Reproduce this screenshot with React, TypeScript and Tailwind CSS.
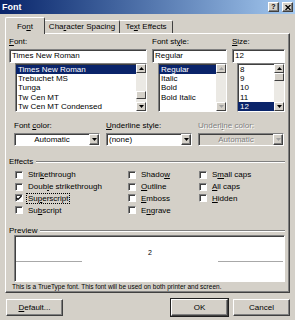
import React from 'react'

const sunken =
  'border border-t-[#808080] border-l-[#808080] border-r-white border-b-white shadow-[inset_1px_1px_0_#404040]'
const raised =
  'border border-t-white border-l-white border-r-[#404040] border-b-[#404040] shadow-[inset_-1px_-1px_0_#808080]'

function U({ children }: { children: React.ReactNode }) {
  return <span className="underline underline-offset-[1px]">{children}</span>
}

function Arrow({ dir, disabled }: { dir: 'up' | 'down'; disabled?: boolean }) {
  return (
    <svg width="5" height="3" viewBox="0 0 5 3">
      <polygon
        points={dir === 'up' ? '2.5,0 5,3 0,3' : '0,0 5,0 2.5,3'}
        fill={disabled ? '#a0a0a0' : '#000'}
      />
    </svg>
  )
}

function ScrollButton({ dir, disabled }: { dir: 'up' | 'down'; disabled?: boolean }) {
  return (
    <div className="flex h-[9px] w-[10px] items-center justify-center border border-t-white border-l-white border-r-[#404040] border-b-[#404040] bg-[#d4d0c8]">
      <Arrow dir={dir} disabled={disabled} />
    </div>
  )
}

function Scrollbar({ thumb, disabled }: { thumb?: string; disabled?: boolean }) {
  return (
    <div className="flex w-[10px] flex-col bg-[#ebe9e4]">
      <ScrollButton dir="up" disabled={disabled} />
      <div className="flex-1">
        {thumb && (
          <div
            className={`${thumb} h-[8px] w-[10px] border border-t-white border-l-white border-r-[#404040] border-b-[#404040] bg-[#d4d0c8]`}
          />
        )}
      </div>
      <ScrollButton dir="down" disabled={disabled} />
    </div>
  )
}

function ListBox({
  items,
  selected,
  className,
  thumb,
  disabled,
}: {
  items: string[]
  selected: string
  className: string
  thumb?: string
  disabled?: boolean
}) {
  return (
    <div className={`flex h-[49px] bg-white ${sunken} ${className}`}>
      <div className="min-w-0 flex-1 overflow-hidden pt-[1px]">
        {items.map((it) => (
          <div
            key={it}
            className={`h-[9.2px] whitespace-nowrap pl-[2px] leading-[9.2px] ${
              it === selected ? 'bg-[#0a246a] text-white' : ''
            }`}
          >
            {it}
          </div>
        ))}
      </div>
      <Scrollbar thumb={thumb} disabled={disabled} />
    </div>
  )
}

function Dropdown({
  text,
  center,
  disabled,
}: {
  text: string
  center?: boolean
  disabled?: boolean
}) {
  return (
    <div className={`flex h-[13px] ${sunken} ${disabled ? 'bg-[#d4d0c8]' : 'bg-white'}`}>
      <div
        className={`flex-1 px-[2px] leading-[11px] ${center ? 'text-center' : ''} ${
          disabled ? 'text-[#808080] [text-shadow:1px_1px_0_#fff]' : ''
        }`}
      >
        {text}
      </div>
      <div className={`flex h-[11px] w-[10px] items-center justify-center bg-[#d4d0c8] ${raised}`}>
        <Arrow dir="down" disabled={disabled} />
      </div>
    </div>
  )
}

function Check({ label, checked, focus }: { label: React.ReactNode; checked?: boolean; focus?: boolean }) {
  return (
    <div className="flex h-[11.8px] items-center">
      <div className={`flex h-[8px] w-[8px] shrink-0 items-center justify-center bg-white ${sunken}`}>
        {checked && (
          <svg width="6" height="6" viewBox="0 0 6 6">
            <path d="M0.5 3 L2 4.5 L5.5 1" stroke="#000" strokeWidth="1.2" fill="none" />
          </svg>
        )}
      </div>
      <span
        className={`ml-[3px] whitespace-nowrap px-[1px] leading-[9px] ${
          focus ? 'border border-dotted border-black' : 'border border-transparent'
        }`}
      >
        {label}
      </span>
    </div>
  )
}

function Button({ children, isDefault }: { children: React.ReactNode; isDefault?: boolean }) {
  return (
    <div
      className={`flex h-[17px] w-[57px] items-center justify-center bg-[#d4d0c8] ${raised} ${
        isDefault ? 'outline outline-1 outline-[#202020]' : ''
      }`}
    >
      {children}
    </div>
  )
}

export default function App() {
  return (
    <div className="h-[320px] w-[295px] select-none overflow-hidden bg-[#d4d0c8] font-['Liberation_Sans',Arial,sans-serif] text-[8px] leading-[10px] text-black">
      {/* title bar */}
      <div className="flex h-[14px] items-center justify-between bg-linear-to-r from-[#0a246a] to-[#a6caf0] px-[2px]">
        <span className="text-[9px] font-bold text-white">Font</span>
        <div className="flex gap-[3px]">
          <div className={`flex h-[10px] w-[11px] items-center justify-center bg-[#d4d0c8] text-[7px] font-bold leading-[8px] ${raised}`}>
            ?
          </div>
          <div className={`flex h-[10px] w-[11px] items-center justify-center bg-[#d4d0c8] ${raised}`}>
            <svg width="6" height="5" viewBox="0 0 6 5">
              <path d="M0.5 0 L5.5 5 M5.5 0 L0.5 5" stroke="#000" strokeWidth="1.3" />
            </svg>
          </div>
        </div>
      </div>

      {/* tabs */}
      <div className="flex h-[19px] items-end pl-[5px]">
        <div className="relative z-10 -mb-[1px] flex h-[17px] w-[40px] items-center justify-center rounded-t-[2px] border-t border-l border-r border-t-white border-l-white border-r-[#404040] bg-[#d4d0c8] pt-[1px]">
          Fo<U>n</U>t
        </div>
        <div className="flex h-[13px] w-[75px] items-center justify-center rounded-tr-[2px] border-t border-r border-t-white border-r-[#404040]">
          Cha<U>r</U>acter Spacing
        </div>
        <div className="flex h-[13px] w-[53px] items-center justify-center rounded-tr-[2px] border-t border-r border-t-white border-r-[#404040]">
          Te<U>x</U>t Effects
        </div>
      </div>

      {/* panel */}
      <div className={`ml-[5px] flex h-[260px] w-[285px] flex-col ${raised}`}>
        <div className="flex gap-[5px] pl-[3px] pt-[3px]">
          <div className="flex w-[138px] flex-col">
            <div className="h-[12px]">
              <U>F</U>ont:
            </div>
            <div className={`h-[14px] bg-white pl-[2px] leading-[12px] ${sunken}`}>Times New Roman</div>
            <ListBox
              className="ml-[6px] w-[132px]"
              items={['Times New Roman', 'Trebuchet MS', 'Tunga', 'Tw Cen MT', 'Tw Cen MT Condensed']}
              selected="Times New Roman"
              thumb="mt-[18px]"
            />
          </div>
          <div className="flex w-[75px] flex-col">
            <div className="h-[12px]">
              Font st<U>y</U>le:
            </div>
            <div className={`h-[14px] bg-white pl-[2px] leading-[12px] ${sunken}`}>Regular</div>
            <ListBox
              className="ml-[6px] w-[69px]"
              items={['Regular', 'Italic', 'Bold', 'Bold Italic']}
              selected="Regular"
              disabled
            />
          </div>
          <div className="flex w-[53px] flex-col">
            <div className="h-[12px]">
              <U>S</U>ize:
            </div>
            <div className={`h-[14px] bg-white pl-[2px] leading-[12px] ${sunken}`}>12</div>
            <ListBox
              className="ml-[5px] w-[48px]"
              items={['8', '9', '10', '11', '12']}
              selected="12"
              thumb="mt-0"
            />
          </div>
        </div>

        {/* dropdown row */}
        <div className="mt-[9px] flex gap-[6px] pl-[8px]">
          <div className="flex w-[86px] flex-col">
            <div className="h-[12px]">
              Font <U>c</U>olor:
            </div>
            <Dropdown text="Automatic" center />
          </div>
          <div className="flex w-[86px] flex-col">
            <div className="h-[12px]">
              <U>U</U>nderline style:
            </div>
            <Dropdown text="(none)" />
          </div>
          <div className="flex w-[86px] flex-col">
            <div className="h-[12px] text-[#808080] [text-shadow:1px_1px_0_#fff]">
              Underl<U>i</U>ne color:
            </div>
            <Dropdown text="Automatic" center disabled />
          </div>
        </div>

        {/* effects */}
        <div className="mt-[11px] flex h-[10px] items-center pl-[3px] pr-[4px]">
          <span>Effects</span>
          <div className="ml-[3px] h-[2px] flex-1 border-t border-b border-t-[#808080] border-b-white" />
        </div>
        <div className="mt-[2px] flex pl-[9px]">
          <div className="flex w-[113px] flex-col">
            <Check label={<>Stri<U>k</U>ethrough</>} />
            <Check label={<>Doub<U>l</U>e strikethrough</>} />
            <Check label={<>Su<U>p</U>erscript</>} checked focus />
            <Check label={<>Su<U>b</U>script</>} />
          </div>
          <div className="flex w-[71px] flex-col">
            <Check label={<>Shado<U>w</U></>} />
            <Check label={<><U>O</U>utline</>} />
            <Check label={<><U>E</U>mboss</>} />
            <Check label={<>E<U>n</U>grave</>} />
          </div>
          <div className="flex flex-col">
            <Check label={<>S<U>m</U>all caps</>} />
            <Check label={<><U>A</U>ll caps</>} />
            <Check label={<><U>H</U>idden</>} />
          </div>
        </div>

        {/* preview */}
        <div className="mt-[10px] flex h-[9px] items-center pl-[3px] pr-[4px]">
          <span>Preview</span>
          <div className="ml-[3px] h-[2px] flex-1 border-t border-b border-t-[#808080] border-b-white" />
        </div>
        <div className={`ml-[8px] h-[47px] w-[271px] bg-white ${sunken}`}>
          <div className="mt-[12px] flex items-start justify-between px-[1px]">
            <div className="mt-[13px] h-[1px] w-[66px] bg-[#a8a8a8]" />
            <span className="text-[7px] leading-[10px]">2</span>
            <div className="mt-[13px] h-[1px] w-[65px] bg-[#a8a8a8]" />
          </div>
        </div>
        <div className="mt-[1px] whitespace-nowrap pl-[6px] text-[6.5px] leading-[8px]">
          This is a TrueType font. This font will be used on both printer and screen.
        </div>
      </div>

      {/* buttons */}
      <div className="mt-[6px] flex items-center pl-[6px] pr-[5px]">
        <Button>
          <U>D</U>efault...
        </Button>
        <div className="flex-1" />
        <div className="flex gap-[5px]">
          <Button isDefault>OK</Button>
          <Button>Cancel</Button>
        </div>
      </div>
    </div>
  )
}
